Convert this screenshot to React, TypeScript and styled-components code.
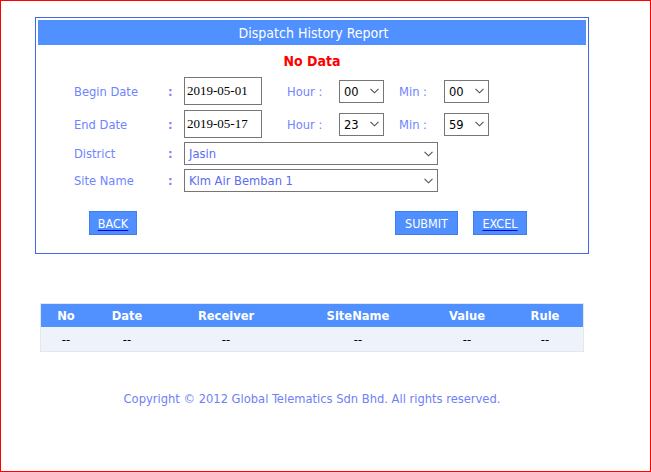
import styled, { createGlobalStyle } from "styled-components";

const GlobalStyle = createGlobalStyle`
  html, body {
    margin: 0;
    padding: 0;
    background: #ffffff;
  }
  * {
    box-sizing: border-box;
  }
`;

const Frame = styled.div`
  width: 651px;
  height: 472px;
  border: 1px solid #ff0000;
  padding: 16px 0 0 34px;
  font-family: "DejaVu Sans Condensed", "DejaVu Sans", Verdana, sans-serif;
  font-size: 12.8px;
`;

const Panel = styled.div`
  width: 554px;
  height: 237px;
  border: 1px solid #4169e1;
  padding: 2px;
`;

const TitleBar = styled.div`
  height: 25px;
  background: #5090ff;
  color: #ffffff;
  font-size: 14px;
  display: flex;
  align-items: center;
  justify-content: center;
  padding-left: 3px;
`;

const Status = styled.div`
  margin-top: 8px;
  text-align: center;
  color: #ff0000;
  font-weight: bold;
  font-size: 14px;
  line-height: 16px;
`;

const Form = styled.div`
  padding-left: 36px;
  display: flex;
  flex-direction: column;
`;

const Row = styled.div<{ $mt: number; $h: number }>`
  display: grid;
  grid-template-columns: 90px 20px 1fr;
  align-items: center;
  margin-top: ${(p) => p.$mt}px;
  height: ${(p) => p.$h}px;
`;

const Label = styled.span`
  color: #6f84ff;
`;

const Colon = styled.span`
  color: #8a7cf5;
  font-weight: bold;
  padding-left: 4px;
`;

const Inline = styled.div`
  display: flex;
  align-items: center;
`;

const DateBox = styled.div`
  width: 78px;
  height: 28px;
  border: 1px solid #767676;
  font-family: "Liberation Serif", "Times New Roman", serif;
  font-size: 13px;
  color: #000;
  display: flex;
  align-items: center;
  padding-left: 2px;
`;

const SubLabel = styled.span<{ $w: number; $ml: number }>`
  color: #6f84ff;
  width: ${(p) => p.$w}px;
  margin-left: ${(p) => p.$ml}px;
`;

const SelectBox = styled.div<{ $w: number }>`
  width: ${(p) => p.$w}px;
  height: 23px;
  border: 1px solid #767676;
  display: flex;
  align-items: center;
  justify-content: space-between;
  padding: 0 4px 0 4px;
`;

const SelectText = styled.span<{ $c: string }>`
  color: ${(p) => p.$c};
`;

const Chevron = () => (
  <svg width="9" height="6" viewBox="0 0 9 6">
    <path d="M0.5 0.8 L4.5 4.8 L8.5 0.8" fill="none" stroke="#505050" strokeWidth="1.1" />
  </svg>
);

const ButtonRow = styled.div`
  display: flex;
  margin-top: 19px;
  padding-left: 51px;
`;

const Button = styled.div<{ $w: number; $ml?: number; $link?: boolean }>`
  width: ${(p) => p.$w}px;
  height: 24px;
  margin-left: ${(p) => p.$ml ?? 0}px;
  background: #4f8fff;
  border: 1px solid #3b7ff0;
  color: #ffffff;
  font-size: 12.5px;
  display: flex;
  align-items: center;
  justify-content: center;
  text-decoration: ${(p) => (p.$link ? "underline" : "none")};
  text-decoration-color: #0000ee;
  text-underline-offset: 2px;
`;

const Table = styled.div`
  margin-top: 49px;
  margin-left: 5px;
  width: 544px;
  border: 1px solid #e4e6ec;
  border-top-color: #e8e8e8;
`;

const TRow = styled.div<{ $head?: boolean }>`
  display: grid;
  grid-template-columns: 50px 72px 126px 138px 80px 76px;
  height: ${(p) => (p.$head ? 23 : 24)}px;
  align-items: center;
  background: ${(p) => (p.$head ? "#5090ff" : "#eef2fb")};
  color: ${(p) => (p.$head ? "#ffffff" : "#000000")};
  font-weight: ${(p) => (p.$head ? "bold" : "normal")};
`;

const Cell = styled.span`
  text-align: center;
`;

const Copyright = styled.div`
  width: 554px;
  margin-top: 39px;
  text-align: center;
  color: #6f7ff5;
`;

const columns = ["No", "Date", "Receiver", "SiteName", "Value", "Rule"];

export default function App() {
  return (
    <>
      <GlobalStyle />
      <Frame>
        <Panel>
          <TitleBar>Dispatch History Report</TitleBar>
          <Status>No Data</Status>
          <Form>
            <Row $mt={8} $h={28}>
              <Label>Begin Date</Label>
              <Colon>:</Colon>
              <Inline>
                <DateBox>2019-05-01</DateBox>
                <SubLabel $w={52} $ml={25}>Hour :</SubLabel>
                <SelectBox $w={45}>
                  <SelectText $c="#000">00</SelectText>
                  <Chevron />
                </SelectBox>
                <SubLabel $w={45} $ml={15}>Min :</SubLabel>
                <SelectBox $w={45}>
                  <SelectText $c="#000">00</SelectText>
                  <Chevron />
                </SelectBox>
              </Inline>
            </Row>
            <Row $mt={5} $h={28}>
              <Label>End Date</Label>
              <Colon>:</Colon>
              <Inline>
                <DateBox>2019-05-17</DateBox>
                <SubLabel $w={52} $ml={25}>Hour :</SubLabel>
                <SelectBox $w={45}>
                  <SelectText $c="#000">23</SelectText>
                  <Chevron />
                </SelectBox>
                <SubLabel $w={45} $ml={15}>Min :</SubLabel>
                <SelectBox $w={45}>
                  <SelectText $c="#000">59</SelectText>
                  <Chevron />
                </SelectBox>
              </Inline>
            </Row>
            <Row $mt={4} $h={23}>
              <Label>District</Label>
              <Colon>:</Colon>
              <SelectBox $w={254}>
                <SelectText $c="#5a6cf0">Jasin</SelectText>
                <Chevron />
              </SelectBox>
            </Row>
            <Row $mt={4} $h={23}>
              <Label>Site Name</Label>
              <Colon>:</Colon>
              <SelectBox $w={254}>
                <SelectText $c="#5a6cf0">Klm Air Bemban 1</SelectText>
                <Chevron />
              </SelectBox>
            </Row>
          </Form>
          <ButtonRow>
            <Button $w={48} $link>BACK</Button>
            <Button $w={63} $ml={258}>SUBMIT</Button>
            <Button $w={54} $ml={15} $link>EXCEL</Button>
          </ButtonRow>
        </Panel>
        <Table>
          <TRow $head>
            {columns.map((c) => (
              <Cell key={c}>{c}</Cell>
            ))}
          </TRow>
          <TRow>
            {columns.map((c) => (
              <Cell key={c}>--</Cell>
            ))}
          </TRow>
        </Table>
        <Copyright>Copyright © 2012 Global Telematics Sdn Bhd. All rights reserved.</Copyright>
      </Frame>
    </>
  );
}
